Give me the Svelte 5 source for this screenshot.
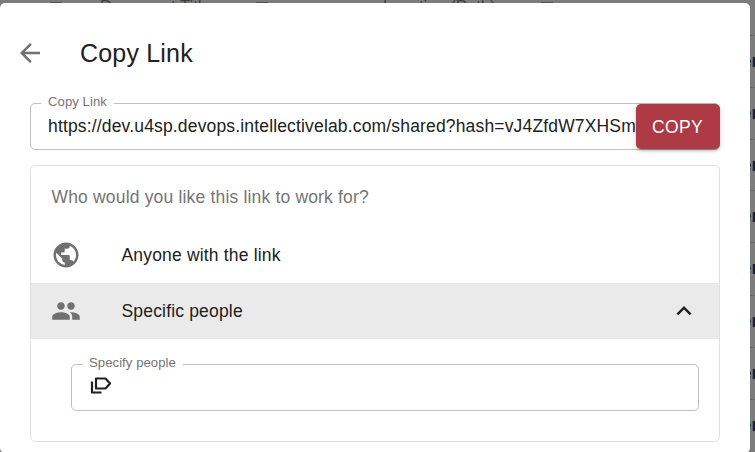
<script>
  const url = 'https://dev.u4sp.devops.intellectivelab.com/shared?hash=vJ4ZfdW7XHSm';
  const rows = [61, 113, 165, 216, 268, 321, 373, 425];
</script>

<div class="page">
  <div class="behind" aria-hidden="true">
    <i class="box" style="left:50px"></i>
    <span class="head" style="left:100px">Document Title</span>
    <i class="box" style="left:256px"></i>
    <span class="head" style="left:383px">Location (Path)</span>
    <i class="box" style="left:541px"></i>
    {#each rows as y}
      <span class="cell" style="top:{y - 11}px">er</span>
      <i class="rule" style="top:{y - 26}px"></i>
    {/each}
  </div>
  <main class="dialog">
    <header>
      <svg class="back" viewBox="0 0 24 24"><path d="M20 11H7.83l5.59-5.59L12 4l-8 8 8 8 1.41-1.41L7.83 13H20v-2z" /></svg>
      <h1>Copy Link</h1>
    </header>
    <fieldset class="link">
      <legend>Copy Link</legend>
      <div class="linkrow">
        <div class="url">{url}</div>
        <button>COPY</button>
      </div>
    </fieldset>
    <section>
      <p>Who would you like this link to work for?</p>
      <div class="row">
        <svg viewBox="0 0 24 24"><path d="M12 2C6.48 2 2 6.48 2 12s4.48 10 10 10 10-4.48 10-10S17.52 2 12 2zm-1 17.93c-3.95-.49-7-3.85-7-7.93 0-.62.08-1.21.21-1.79L9 15v1c0 1.1.9 2 2 2v1.93zm6.9-2.54c-.26-.81-1-1.39-1.9-1.39h-1v-3c0-.55-.45-1-1-1H8v-2h2c.55 0 1-.45 1-1V7h2c1.1 0 2-.9 2-2v-.41c2.93 1.19 5 4.06 5 7.41 0 2.08-.8 3.97-2.1 5.39z" /></svg>
        <span>Anyone with the link</span>
      </div>
      <div class="row selected">
        <svg viewBox="0 0 24 24"><path d="M16 11c1.66 0 2.99-1.34 2.99-3S17.66 5 16 5c-1.66 0-3 1.34-3 3s1.34 3 3 3zm-8 0c1.66 0 2.99-1.34 2.99-3S9.66 5 8 5C6.34 5 5 6.34 5 8s1.34 3 3 3zm0 2c-2.33 0-7 1.17-7 3.5V19h14v-2.5c0-2.33-4.67-3.5-7-3.5zm8 0c-.29 0-.62.02-.97.05 1.16.84 1.97 1.97 1.97 3.45V19h6v-2.5c0-2.33-4.67-3.5-7-3.5z" /></svg>
        <span>Specific people</span>
        <svg class="chev" viewBox="0 0 24 24"><path d="M12 8l-6 6 1.41 1.41L12 10.83l4.59 4.58L18 14z" /></svg>
      </div>
      <fieldset class="people">
        <legend>Specify people</legend>
        <svg class="tags" viewBox="0 0 22 18"><path d="M6 2.5h9.5L20 7.5l-4.5 5H6zM2 5.5v11h9.5" /></svg>
      </fieldset>
    </section>
  </main>
</div>

<style>
  :global(body) { margin: 0; }
  .page {
    position: relative;
    box-sizing: border-box;
    width: 755px;
    height: 452px;
    padding: 3px 5px 0 0;
    overflow: hidden;
    background: #7c7c7c;
    font-family: "Liberation Sans", Arial, sans-serif;
    font-size: 17.5px;
    letter-spacing: 0.01em;
    color: #212121;
  }
  .behind { position: absolute; inset: 0; }
  .behind > * { position: absolute; }
  .head { top: -3px; font-size: 16.6px; letter-spacing: 0; line-height: 20px; color: #404040; white-space: nowrap; }
  .box { top: 2px; width: 12px; height: 1px; background: #505050; }
  .cell { left: 741.5px; line-height: 22px; font-weight: bold; color: #0b2440; }
  .rule { right: 0; width: 10px; height: 1px; background: #696969; }
  .dialog {
    position: relative;
    box-sizing: border-box;
    height: 450px;
    padding: 0 30px;
    border-radius: 5px;
    background: #fff;
  }
  header { display: flex; align-items: center; height: 100px; }
  svg { display: block; flex: none; width: 30px; height: 30px; fill: #707070; }
  .back { margin-left: -15px; }
  h1 { margin: 0 0 0 35px; font-size: 25px; font-weight: 400; letter-spacing: 0.0075em; }
  fieldset { box-sizing: border-box; min-width: 0; margin: 0; padding: 0; border: 1px solid #c0c0c0; border-radius: 5px; }
  legend { height: 15px; margin-left: 10px; padding: 0 7px; font-size: 13.125px; line-height: 11px; letter-spacing: 0.005em; color: #757575; }
  .link { height: 54px; margin-top: -7px; }
  .linkrow { display: flex; height: 46px; margin-top: -8px; }
  .url { flex: 1; min-width: 0; padding-left: 17px; line-height: 46px; letter-spacing: 0.0092em; overflow: hidden; white-space: nowrap; }
  button { width: 84px; height: 45px; margin: 1px -1px 0 0; padding: 1px 1px 0 0; border: 0; border-radius: 5px; background: #ad3a45; color: #fff; font: 500 17.5px/45px "Liberation Sans", Arial, sans-serif; letter-spacing: 0.018em; box-shadow: 0 3px 2px -2px #0003, 0 2px 3px #0002, 0 1px 6px #0002; }
  section { box-sizing: border-box; height: 277px; margin-top: 15px; border: 1px solid #e0e0e0; border-radius: 5px; }
  p { margin: 0; padding: 1px 20px 0 20.5px; height: 60px; line-height: 60px; color: #757575; }
  .row { display: flex; align-items: center; height: 56px; padding: 0 20px; }
  .row span { flex: 1; margin-left: 40.5px; }
  .selected { background: #eaeaea; }
  .chev { fill: #212121; }
  .people { height: 54px; margin: 18px 20px 0 40px; }
  .people legend { margin-left: 11px; padding-left: 6px; }
  .people .tags { width: 22px; height: 18px; margin: 4px 0 0 18px; fill: none; stroke: #212121; stroke-width: 2.2; stroke-linejoin: round; }
</style>
